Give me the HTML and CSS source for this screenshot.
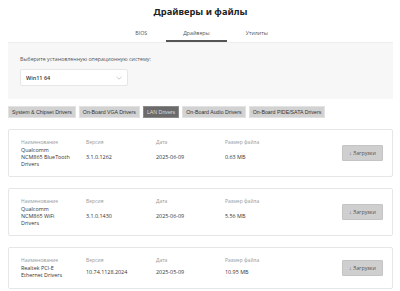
FILE: index.html
```html
<!DOCTYPE html>
<html lang="ru">
<head>
    <meta charset="UTF-8">
    <title>Драйверы и файлы</title>
    <link rel="stylesheet" href="styles.css">
</head>
<body>
<div class="page">
    <h1 class="title">Драйверы и файлы</h1>

    <!-- Вкладки -->
    <div class="tabs">
        <a class="tab" href="#">BIOS</a>
        <a class="tab active" href="#">Драйверы</a>
        <a class="tab" href="#">Утилиты</a>
    </div>

    <!-- Выбор ОС -->
    <div class="os-panel">
        <p class="os-label">Выберите установленную операционную систему:</p>
        <div class="os-select">
            <span>Win11 64</span>
            <svg class="chevron" width="6" height="4" viewBox="0 0 6 4"><path d="M0.5 0.8 L3 3.2 L5.5 0.8" fill="none" stroke="#aaa" stroke-width="0.6"/></svg>
        </div>
    </div>

    <!-- Категории -->
    <div class="categories">
        <button class="cat">System &amp; Chipset Drivers</button>
        <button class="cat">On-Board VGA Drivers</button>
        <button class="cat active">LAN Drivers</button>
        <button class="cat">On-Board Audio Drivers</button>
        <button class="cat">On-Board PIDE/SATA Drivers</button>
    </div>

    <!-- Список драйверов -->
    <div class="driver-list">
        <div class="driver-card">
            <div class="col col-name">
                <span class="label">Наименование</span>
                <span class="value">Qualcomm<br>NCM865 BlueTooth<br>Drivers</span>
            </div>
            <div class="col col-ver">
                <span class="label">Версия</span>
                <span class="value">3.1.0.1262</span>
            </div>
            <div class="col col-date">
                <span class="label">Дата</span>
                <span class="value">2025-06-09</span>
            </div>
            <div class="col col-size">
                <span class="label">Размер файла</span>
                <span class="value">0.63 MB</span>
            </div>
            <button class="download">↓ Загрузки</button>
        </div>

        <div class="driver-card">
            <div class="col col-name">
                <span class="label">Наименование</span>
                <span class="value">Qualcomm<br>NCM865 WiFi<br>Drivers</span>
            </div>
            <div class="col col-ver">
                <span class="label">Версия</span>
                <span class="value">3.1.0.1430</span>
            </div>
            <div class="col col-date">
                <span class="label">Дата</span>
                <span class="value">2025-06-09</span>
            </div>
            <div class="col col-size">
                <span class="label">Размер файла</span>
                <span class="value">5.56 MB</span>
            </div>
            <button class="download">↓ Загрузки</button>
        </div>

        <div class="driver-card short">
            <div class="col col-name">
                <span class="label">Наименование</span>
                <span class="value">Realtek PCI-E<br>Ethernet Drivers</span>
            </div>
            <div class="col col-ver">
                <span class="label">Версия</span>
                <span class="value">10.74.1128.2024</span>
            </div>
            <div class="col col-date">
                <span class="label">Дата</span>
                <span class="value">2025-05-09</span>
            </div>
            <div class="col col-size">
                <span class="label">Размер файла</span>
                <span class="value">10.95 MB</span>
            </div>
            <button class="download">↓ Загрузки</button>
        </div>
    </div>
</div>
</body>
</html>
```

FILE: styles.css
```css
body {
    margin: 0;
    background-color: #ffffff;
    font-family: 'Open Sans', 'Noto Sans', sans-serif;
    color: #333;
}

.page {
    padding: 0 7px 0 8px;
}

/* Заголовок */
.title {
    margin: 0;
    padding-top: 6px;
    height: 16px;
    font-family: 'Noto Sans', sans-serif;
    font-size: 9.3px;
    line-height: 12px;
    font-weight: 700;
    text-align: center;
    color: #222;
}

/* Вкладки */
.tabs {
    display: flex;
    justify-content: center;
    gap: 2px;
    padding-top: 6px;
    padding-left: 2px;
}

.tab {
    display: block;
    padding: 0 17px;
    height: 12px;
    font-size: 5.3px;
    line-height: 10px;
    color: #555;
    text-decoration: none;
    border-bottom: 2px solid transparent;
}

.tab.active {
    border-bottom-color: #555;
}

/* Панель выбора ОС */
.os-panel {
    background-color: #f7f7f7;
    border-top: 1px solid #eeeeee;
    padding: 12px 12px 12px;
    height: 32px;
}

.os-label {
    margin: 0 0 6px;
    font-size: 5.3px;
    line-height: 8px;
    color: #555;
}

.os-select {
    display: flex;
    align-items: center;
    justify-content: space-between;
    width: 96px;
    height: 15px;
    padding: 0 5px;
    background-color: #fff;
    border: 1px solid #e6e6e6;
    border-radius: 2px;
    font-size: 5.5px;
    font-weight: 600;
    color: #333;
}

/* Категории */
.categories {
    display: flex;
    gap: 3px;
    margin-top: 7px;
}

.cat {
    height: 12px;
    padding: 0 3px;
    border: 1px solid #e2e2e2;
    background-color: #d2d2d2;
    font-family: 'Liberation Sans', Arial, sans-serif;
    font-size: 5.25px;
    color: #333;
    cursor: pointer;
}

.cat.active {
    background-color: #6b6b6b;
    border-color: #8a8a8a;
    color: #dcdcdc;
}

/* Карточки драйверов */
.driver-list {
    display: flex;
    flex-direction: column;
    gap: 11px;
    margin-top: 11px;
}

.driver-card {
    display: flex;
    align-items: center;
    padding: 8px 9px 8px 12px;
    border: 1px solid #e6e6e6;
    border-radius: 2px;
    background-color: #fff;
}

.col {
    display: grid;
    grid-template-rows: 8px 22px;
    align-self: stretch;
}

.col-name { width: 65px; }
.col-ver { width: 70px; }
.col-date { width: 69px; }
.col-size { flex: 1; }

.driver-card.short .col {
    grid-template-rows: 8px 16px;
}

.label {
    font-size: 5px;
    line-height: 8px;
    color: #9a9a9a;
}

.value {
    align-self: center;
    font-size: 5.4px;
    line-height: 7px;
    color: #333;
}

.download {
    width: 41px;
    height: 16px;
    border: 1px solid #c4c4c4;
    border-radius: 1px;
    background-color: #cfcfcf;
    font-family: 'Open Sans', sans-serif;
    font-size: 5.3px;
    color: #555;
    cursor: pointer;
}
```
